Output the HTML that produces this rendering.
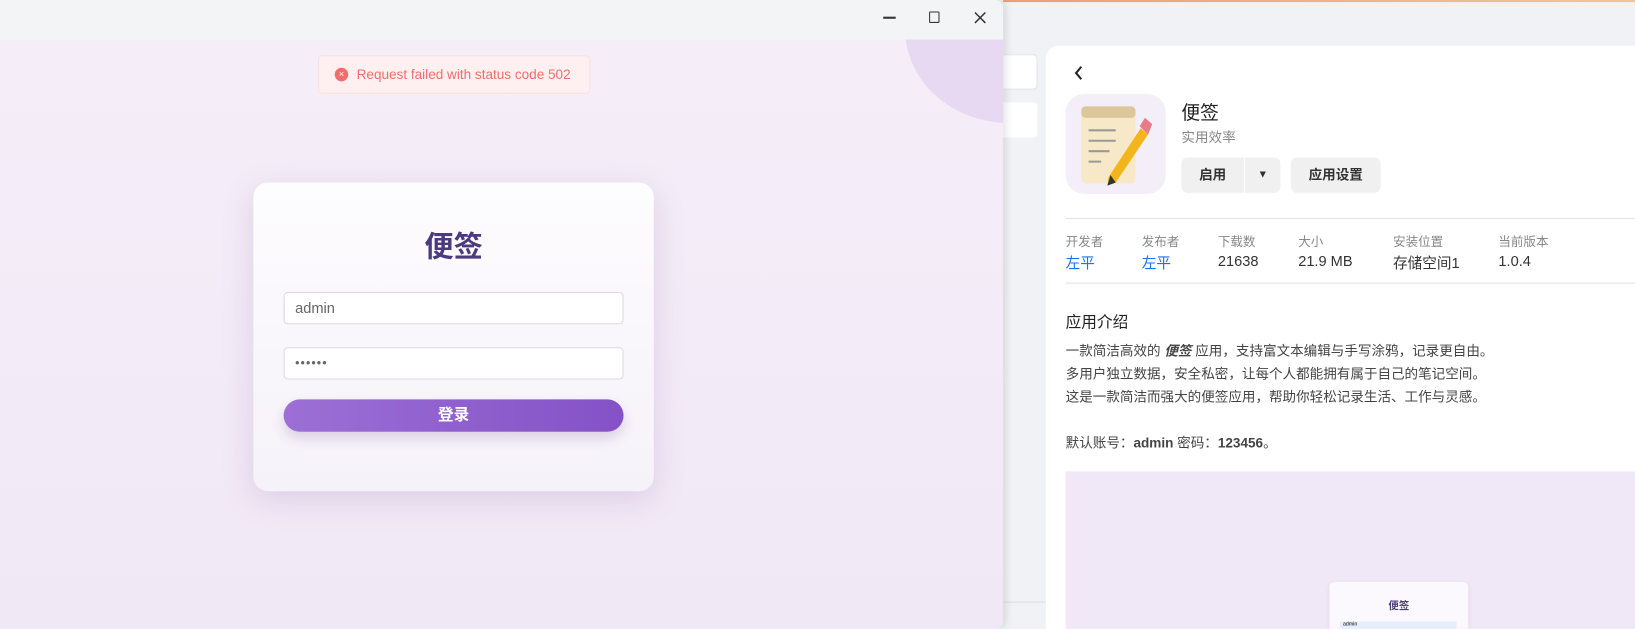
<!DOCTYPE html>
<html><head><meta charset="utf-8"><style>
*{margin:0;padding:0;box-sizing:border-box}
html,body{width:1635px;height:629px;overflow:hidden;background:#f0f2f5}
body{font-family:"Liberation Sans","Noto Sans CJK SC",sans-serif;position:relative}
#w{position:absolute;left:0;top:0;width:1568px;height:603px;overflow:hidden;transform:scale(1.04273);transform-origin:0 0}
.topline{position:absolute;left:962px;top:0;width:673px;height:2px;background:linear-gradient(90deg,#e9a07a,#f3c89a)}
.win{position:absolute;left:0;top:0;width:962px;height:603px;background:#f3eaf7;box-shadow:2px 0 8px rgba(0,0,0,.12);overflow:hidden;border-radius:0 8px 8px 0}
.tb{height:38px;background:#f3f4f6;position:relative}
.content{position:absolute;top:38px;left:0;right:0;bottom:0;background:linear-gradient(#f5eef8,#f1e8f6);overflow:hidden}
.circ{position:absolute;left:868px;top:-100px;width:200px;height:180px;border-radius:50%;background:#e8d9f2}
.toast{position:absolute;left:305px;top:15px;width:261px;height:37px;background:#fef0f0;border:1px solid #fbe0e0;border-radius:4px;color:#f56c6c;font-size:13px;line-height:35px;padding-left:36px}
.toast i{position:absolute;left:15px;top:11px;width:13px;height:13px;border-radius:50%;background:#f56c6c;color:#fff;font-size:9px;line-height:13px;text-align:center;font-style:normal}
.card{position:absolute;left:243px;top:137px;width:384px;height:296px;border-radius:14px;background:linear-gradient(#fdfcfe,#f6f2f9);box-shadow:0 8px 30px rgba(120,80,150,.18)}
.card h1{position:absolute;top:40px;width:100%;text-align:center;font-size:28px;color:#4b3a7e;font-weight:bold}
.inp{position:absolute;left:29px;width:326px;height:31px;border:1px solid #dcd9e2;border-radius:4px;background:#fff;font-size:14px;color:#666;line-height:29px;padding-left:10px}
.btn{position:absolute;left:29px;top:208px;width:326px;height:31px;border-radius:16px;background:linear-gradient(90deg,#9c6fd6,#8452c6);color:#fff;font-weight:bold;font-size:15px;text-align:center;line-height:31px;box-shadow:0 6px 12px rgba(100,60,140,.2)}
.ghost{position:absolute;left:962px;width:33px;background:#fff;border:1px solid #e3e3e6;border-left:none;border-radius:0 4px 4px 0}
.panel{position:absolute;left:1003px;top:44px;width:640px;height:570px;background:#fff;border-radius:12px;overflow:hidden}
.t{position:absolute;white-space:nowrap}
.gb{position:absolute;height:34px;background:#f0f0f0;border-radius:6px;font-size:13px;font-weight:bold;color:#333;line-height:34px;text-align:center}
.lab{font-size:12px;color:#888}
.val{font-size:14px;color:#333}
.p{font-size:13px;color:#444;line-height:22px}
</style></head><body><div id="w">
<div class="topline"></div>
<div class="ghost" style="top:52px;height:34px"></div>
<div class="ghost" style="top:98px;height:34px;border:none"></div>
<div style="position:absolute;left:962px;top:577px;width:41px;height:1px;background:#ddd"></div>
<div class="win">
 <div class="tb">
  <div style="position:absolute;left:847px;top:16px;width:12px;height:1.5px;background:#333"></div>
  <div style="position:absolute;left:891px;top:11px;width:10px;height:11px;border:1.5px solid #333;border-radius:1px"></div>
  <svg style="position:absolute;left:934px;top:11px" width="12" height="12"><path d="M1 1L11 11M11 1L1 11" stroke="#333" stroke-width="1.4"/></svg>
 </div>
 <div class="content">
  <div class="circ"></div>
  <div class="toast"><i>×</i>Request failed with status code 502</div>
  <div class="card">
   <h1>便签</h1>
   <div class="inp" style="top:105px">admin</div>
   <div class="inp" style="top:158px;font-size:12px;letter-spacing:1px">••••••</div>
   <div class="btn">登录</div>
  </div>
 </div>
</div>
<div class="panel">
 <svg class="t" style="left:26px;top:18px" width="12" height="16"><path d="M8 2L3 8L8 14" stroke="#222" stroke-width="2" fill="none"/></svg>
 <div class="t" style="left:19px;top:46px;width:96px;height:96px;border-radius:18px;background:#f3eef8"></div>
 <svg class="t" style="left:31px;top:55px" width="72" height="80">
  <rect x="3" y="3" width="52" height="74" rx="5" fill="#f7e9c8"/>
  <rect x="3" y="3" width="52" height="11" rx="4" fill="#dcc79a"/>
  <g stroke="#999" stroke-width="2"><path d="M10 26h26M10 36h26M10 46h20M10 56h12"/></g>
  <path d="M60 24L67 30L36 76L28 79L29 71Z" fill="#f2b51c"/>
  <path d="M59 22L64 14L71 20L67 30Z" fill="#e77b86"/>
  <path d="M28 79L31 69L36 76Z" fill="#333"/>
 </svg>
 <div class="t" style="left:130px;top:50px;font-size:18px;color:#222">便签</div>
 <div class="t" style="left:130px;top:77px;font-size:13px;color:#888">实用效率</div>
 <div class="gb" style="left:130px;top:107px;width:95px"><span style="position:absolute;left:0;width:60px">启用</span><span style="position:absolute;left:60px;top:0;width:1px;height:34px;background:#fff"></span><span style="position:absolute;left:61px;width:34px;font-size:10px">▼</span></div>
 <div class="gb" style="left:235px;top:107px;width:86px">应用设置</div>
 <div class="t" style="left:19px;top:165px;width:620px;height:1px;background:#e2e2e2"></div>
 <div class="t" style="left:19px;top:227px;width:620px;height:1px;background:#e2e2e2"></div>
 <div class="t lab" style="left:19px;top:179px">开发者</div><div class="t val" style="left:19px;top:198px;color:#1a73e8">左平</div>
 <div class="t lab" style="left:92px;top:179px">发布者</div><div class="t val" style="left:92px;top:198px;color:#1a73e8">左平</div>
 <div class="t lab" style="left:165px;top:179px">下载数</div><div class="t val" style="left:165px;top:198px">21638</div>
 <div class="t lab" style="left:242px;top:179px">大小</div><div class="t val" style="left:242px;top:198px">21.9 MB</div>
 <div class="t lab" style="left:333px;top:179px">安装位置</div><div class="t val" style="left:333px;top:198px">存储空间1</div>
 <div class="t lab" style="left:434px;top:179px">当前版本</div><div class="t val" style="left:434px;top:198px">1.0.4</div>
 <div class="t" style="left:19px;top:254px;font-size:15px;color:#222">应用介绍</div>
 <div class="t p" style="left:19px;top:282px">一款简洁高效的 <b><i>便签</i></b> 应用，支持富文本编辑与手写涂鸦，记录更自由。<br>多用户独立数据，安全私密，让每个人都能拥有属于自己的笔记空间。<br>这是一款简洁而强大的便签应用，帮助你轻松记录生活、工作与灵感。<br><br>默认账号：<b>admin</b> 密码：<b>123456</b>。</div>
 <div class="t" style="left:19px;top:408px;width:620px;height:200px;background:#f1e8f7"></div>
 <div class="t" style="left:272px;top:514px;width:133px;height:100px;background:#fbf9fd;border-radius:5px;box-shadow:0 2px 6px rgba(0,0,0,.06)">
  <div style="position:absolute;top:14px;width:100%;text-align:center;font-size:10px;font-weight:bold;color:#4b3a7e">便签</div>
  <div style="position:absolute;left:10px;top:38px;width:112px;height:10px;background:#e6eefb;font-size:5px;padding-left:3px">admin</div>
 </div>
</div>
</div></body></html>
